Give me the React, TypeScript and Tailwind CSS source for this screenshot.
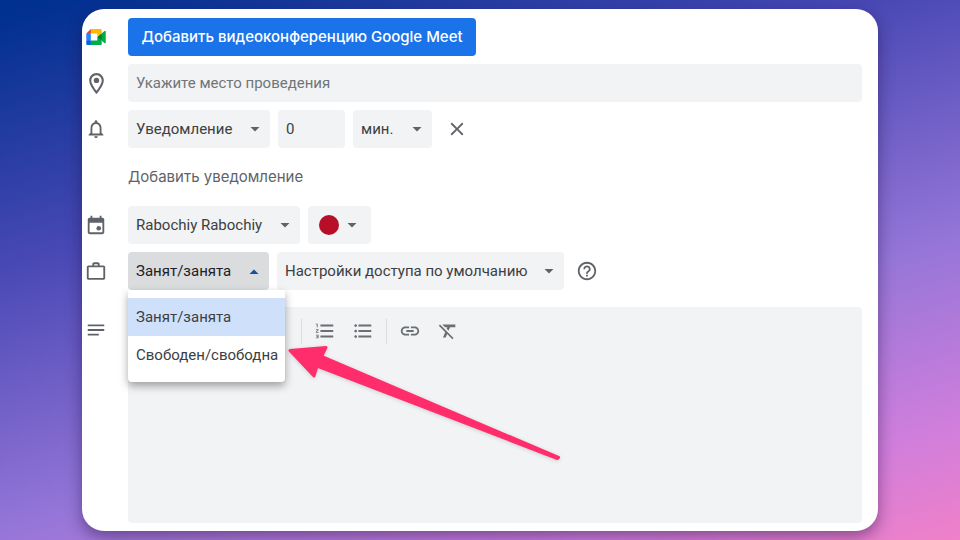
import { useState } from 'react';
import type { ReactNode } from 'react';
import clsx from 'clsx';
import {
  MdAttachFile,
  MdClose,
  MdFormatBold,
  MdFormatClear,
  MdFormatItalic,
  MdFormatListBulleted,
  MdFormatListNumbered,
  MdFormatUnderlined,
  MdHelpOutline,
  MdLink,
  MdNotes,
  MdNotificationsNone,
} from 'react-icons/md';

const AVAILABILITY = ['Занят/занята', 'Свободен/свободна'];

function MeetLogo() {
  return (
    <svg width="20" height="16" viewBox="0 0 87.5 72" aria-hidden="true">
      <path fill="#00832d" d="M49.5 36l8.53 9.75 11.47 7.33 2-17.02-2-16.64-11.69 6.44z" />
      <path fill="#0066da" d="M0 51.5V66c0 3.315 2.685 6 6 6h14.5l3-10.96-3-9.54-9.95-3z" />
      <path fill="#e94235" d="M20.5 0L0 20.5l10.55 3 9.95-3 2.95-9.41z" />
      <path fill="#2684fc" d="M20.5 20.5H0v31h20.5z" />
      <path fill="#00ac47" d="M82.6 8.68L69.5 19.42v33.66l13.16 10.79c1.97 1.54 4.85.135 4.85-2.37V11c0-2.535-2.945-3.925-4.91-2.32zM49.5 36v15.5h-29V72h43c3.315 0 6-2.685 6-6V53.08z" />
      <path fill="#ffba00" d="M63.5 0h-43v20.5h29V36l20-16.57V6c0-3.315-2.685-6-6-6z" />
    </svg>
  );
}

function PinIcon() {
  return (
    <svg width="25" height="25" viewBox="0 0 24 24" fill="currentColor" aria-hidden="true">
      <path d="M12 2C8.13 2 5 5.13 5 9c0 5.25 7 13 7 13s7-7.75 7-13c0-3.87-3.13-7-7-7zM7 9c0-2.76 2.24-5 5-5s5 2.24 5 5c0 2.88-2.88 7.19-5 9.88C9.92 16.21 7 11.85 7 9z" />
      <circle cx="12" cy="9" r="2.6" />
    </svg>
  );
}

function CalendarIcon() {
  return (
    <svg width="22" height="22" viewBox="0 0 24 24" fill="currentColor" aria-hidden="true">
      <path d="M19 4h-1V2h-2v2H8V2H6v2H5c-1.1 0-2 .9-2 2v14c0 1.1.9 2 2 2h14c1.1 0 2-.9 2-2V6c0-1.1-.9-2-2-2zm0 16H5V9.500h14V20z" />
      <circle cx="15" cy="15.500" r="2.500" />
    </svg>
  );
}

function BriefcaseIcon() {
  return (
    <svg width="22" height="22" viewBox="0 0 24 24" fill="currentColor" aria-hidden="true">
      <path d="M20 6h-4V4.500C16 3.400 15.100 2.500 14 2.500h-4C8.900 2.500 8 3.400 8 4.500V6H4c-1.100 0-2 .9-2 2v11.500c0 1.100.9 2 2 2h16c1.100 0 2-.9 2-2V8c0-1.100-.9-2-2-2zM10 4.500h4V6h-4V4.500zm10 15H4V8h16v11.500z" />
    </svg>
  );
}

function Caret({ up = false }: { up?: boolean }) {
  return (
    <svg
      className={clsx('pointer-events-none', up ? 'text-[#174ea6]' : 'text-[#5f6368]')}
      width="10"
      height="5"
      viewBox="0 0 10 5"
      fill="currentColor"
      aria-hidden="true"
    >
      <path d={up ? 'M0.500 5L5 0.500 9.500 5z' : 'M0.500 0L5 4.500 9.500 0z'} />
    </svg>
  );
}

function Row({ icon, children }: { icon?: ReactNode; children: ReactNode }) {
  return (
    <div className="flex gap-[18px]">
      <div className="flex h-[38px] w-7 shrink-0 items-center justify-center text-[#5f6368]">{icon}</div>
      <div className="flex min-w-0 flex-1 items-center gap-2">{children}</div>
    </div>
  );
}

interface SelectProps {
  label: string;
  options: string[];
  className: string;
}

function Select({ label, options, className }: SelectProps) {
  return (
    <div className={clsx('relative flex h-[38px] items-center rounded bg-[#f1f3f4]', className)}>
      <select aria-label={label} className="h-full w-full appearance-none rounded bg-transparent pl-2 pr-6 outline-none">
        {options.map((o) => (
          <option key={o}>{o}</option>
        ))}
      </select>
      <span className="pointer-events-none absolute right-[10px]">
        <Caret />
      </span>
    </div>
  );
}

function ToolButton({ label, children }: { label: string; children: ReactNode }) {
  return (
    <button type="button" aria-label={label} className="flex h-8 w-[38px] items-center justify-center">
      {children}
    </button>
  );
}

function Divider() {
  return <span className="mx-1 h-[25px] w-px bg-[#dadce0]" />;
}

// hand-drawn pointer towards the second menu item
function Pointer() {
  return (
    <svg
      className="pointer-events-none absolute left-[160px] top-[92px] z-20 drop-shadow-sm"
      width="274"
      height="118"
      viewBox="288 344 274 118"
      aria-hidden="true"
    >
      <path
        d="M290 350.500L326 347.500L321.500 356.500L558.500 457.500L557.500 458.500L317 366L314 376z"
        fill="#ff2d6b"
        stroke="#ff2d6b"
        strokeWidth="3"
        strokeLinejoin="round"
      />
    </svg>
  );
}

export default function App() {
  const [open, setOpen] = useState(true);
  const [availability, setAvailability] = useState(AVAILABILITY[0]);

  return (
    <div className="flex min-h-screen bg-[linear-gradient(163deg,#003090_2%,#4848b4_32%,#9676d8_64%,#d07edc_86%,#f080c8_100%)] px-[82px] py-[9px] font-['Roboto',sans-serif] text-[15px] text-[#3c4043]">
      <form className="flex flex-1 flex-col gap-2 rounded-[22px] bg-white pb-2 pr-4 pt-[9px] shadow-[0_6px_16px_rgba(30,10,60,0.45)]">
        <Row icon={<MeetLogo />}>
          <button
            type="button"
            className="h-[38px] w-[348px] rounded bg-[#1a73e8] font-['Inter',sans-serif] font-medium text-white"
          >
            Добавить видеоконференцию Google Meet
          </button>
        </Row>

        <Row icon={<PinIcon />}>
          <input
            type="text"
            aria-label="Место проведения"
            placeholder="Укажите место проведения"
            className="h-[38px] w-full rounded bg-[#f1f3f4] px-2 outline-none placeholder:text-[#70757a]"
          />
        </Row>

        <Row icon={<MdNotificationsNone size={22} />}>
          <Select label="Тип уведомления" options={['Уведомление']} className="w-[142px]" />
          <input
            type="text"
            aria-label="Количество"
            defaultValue="0"
            className="h-[38px] w-[67px] rounded bg-[#f1f3f4] px-2 outline-none"
          />
          <Select label="Единица времени" options={['мин.']} className="w-[79px]" />
          <button type="button" aria-label="Удалить уведомление" className="px-[6px] text-[#5f6368]">
            <MdClose size={22} />
          </button>
        </Row>

        <div className="py-[2px]">
          <Row>
            <button type="button" className="h-[38px] font-['Inter',sans-serif] text-[#5f6368]">
              Добавить уведомление
            </button>
          </Row>
        </div>

        <Row icon={<CalendarIcon />}>
          <Select label="Календарь" options={['Rabochiy Rabochiy']} className="w-[172px]" />
          <button
            type="button"
            aria-label="Цвет мероприятия"
            className="flex h-[38px] w-[63px] items-center gap-2 rounded bg-[#f1f3f4] pl-[11px]"
          >
            <span className="size-5 rounded-full bg-[#b80f28]" />
            <Caret />
          </button>
        </Row>

        <Row icon={<BriefcaseIcon />}>
          <div className="relative">
            <button
              type="button"
              aria-haspopup="listbox"
              aria-expanded={open}
              onClick={() => setOpen(!open)}
              className="flex h-[38px] w-[141px] items-center justify-between rounded bg-[#dadcde] pl-2 pr-[10px] text-[#202124]"
            >
              {availability}
              <Caret up={open} />
            </button>
            {open && (
              <ul
                role="listbox"
                aria-label="Доступность"
                className="absolute left-0 top-full z-10 w-[157px] rounded-b bg-white py-2 shadow-[0_4px_8px_rgba(0,0,0,0.35)]"
              >
                {AVAILABILITY.map((item) => (
                  <li
                    key={item}
                    role="option"
                    aria-selected={item === availability}
                    onClick={() => setAvailability(item)}
                    className={clsx(
                      'flex h-[38px] items-center whitespace-nowrap px-2',
                      item === availability && 'bg-[#cfe0fb]'
                    )}
                  >
                    {item}
                  </li>
                ))}
              </ul>
            )}
            <Pointer />
          </div>
          <Select label="Настройки доступа" options={['Настройки доступа по умолчанию']} className="w-[287px]" />
          <button type="button" aria-label="Справка" className="px-1 text-[#5f6368]">
            <MdHelpOutline size={22} />
          </button>
        </Row>

        <div className="mt-[9px] flex flex-1 gap-[18px]">
          <div className="flex h-[46px] w-7 shrink-0 items-center justify-center text-[#5f6368]">
            <MdNotes size={22} />
          </div>
          <div className="flex flex-1 flex-col rounded bg-[#f1f3f4]">
            <div className="flex h-12 items-center pl-[17px] text-[#6b6f73]">
              <ToolButton label="Прикрепить файл">
                <MdAttachFile size={22} />
              </ToolButton>
              <ToolButton label="Полужирный">
                <MdFormatBold size={22} />
              </ToolButton>
              <ToolButton label="Курсив">
                <MdFormatItalic size={22} />
              </ToolButton>
              <ToolButton label="Подчеркнутый">
                <MdFormatUnderlined size={22} />
              </ToolButton>
              <Divider />
              <ToolButton label="Нумерованный список">
                <MdFormatListNumbered size={22} />
              </ToolButton>
              <ToolButton label="Маркированный список">
                <MdFormatListBulleted size={22} />
              </ToolButton>
              <Divider />
              <ToolButton label="Ссылка">
                <MdLink size={22} />
              </ToolButton>
              <ToolButton label="Удалить форматирование">
                <MdFormatClear size={22} />
              </ToolButton>
            </div>
            <textarea aria-label="Описание" className="w-full flex-1 resize-none bg-transparent px-4 outline-none" />
          </div>
        </div>
      </form>
    </div>
  );
}
